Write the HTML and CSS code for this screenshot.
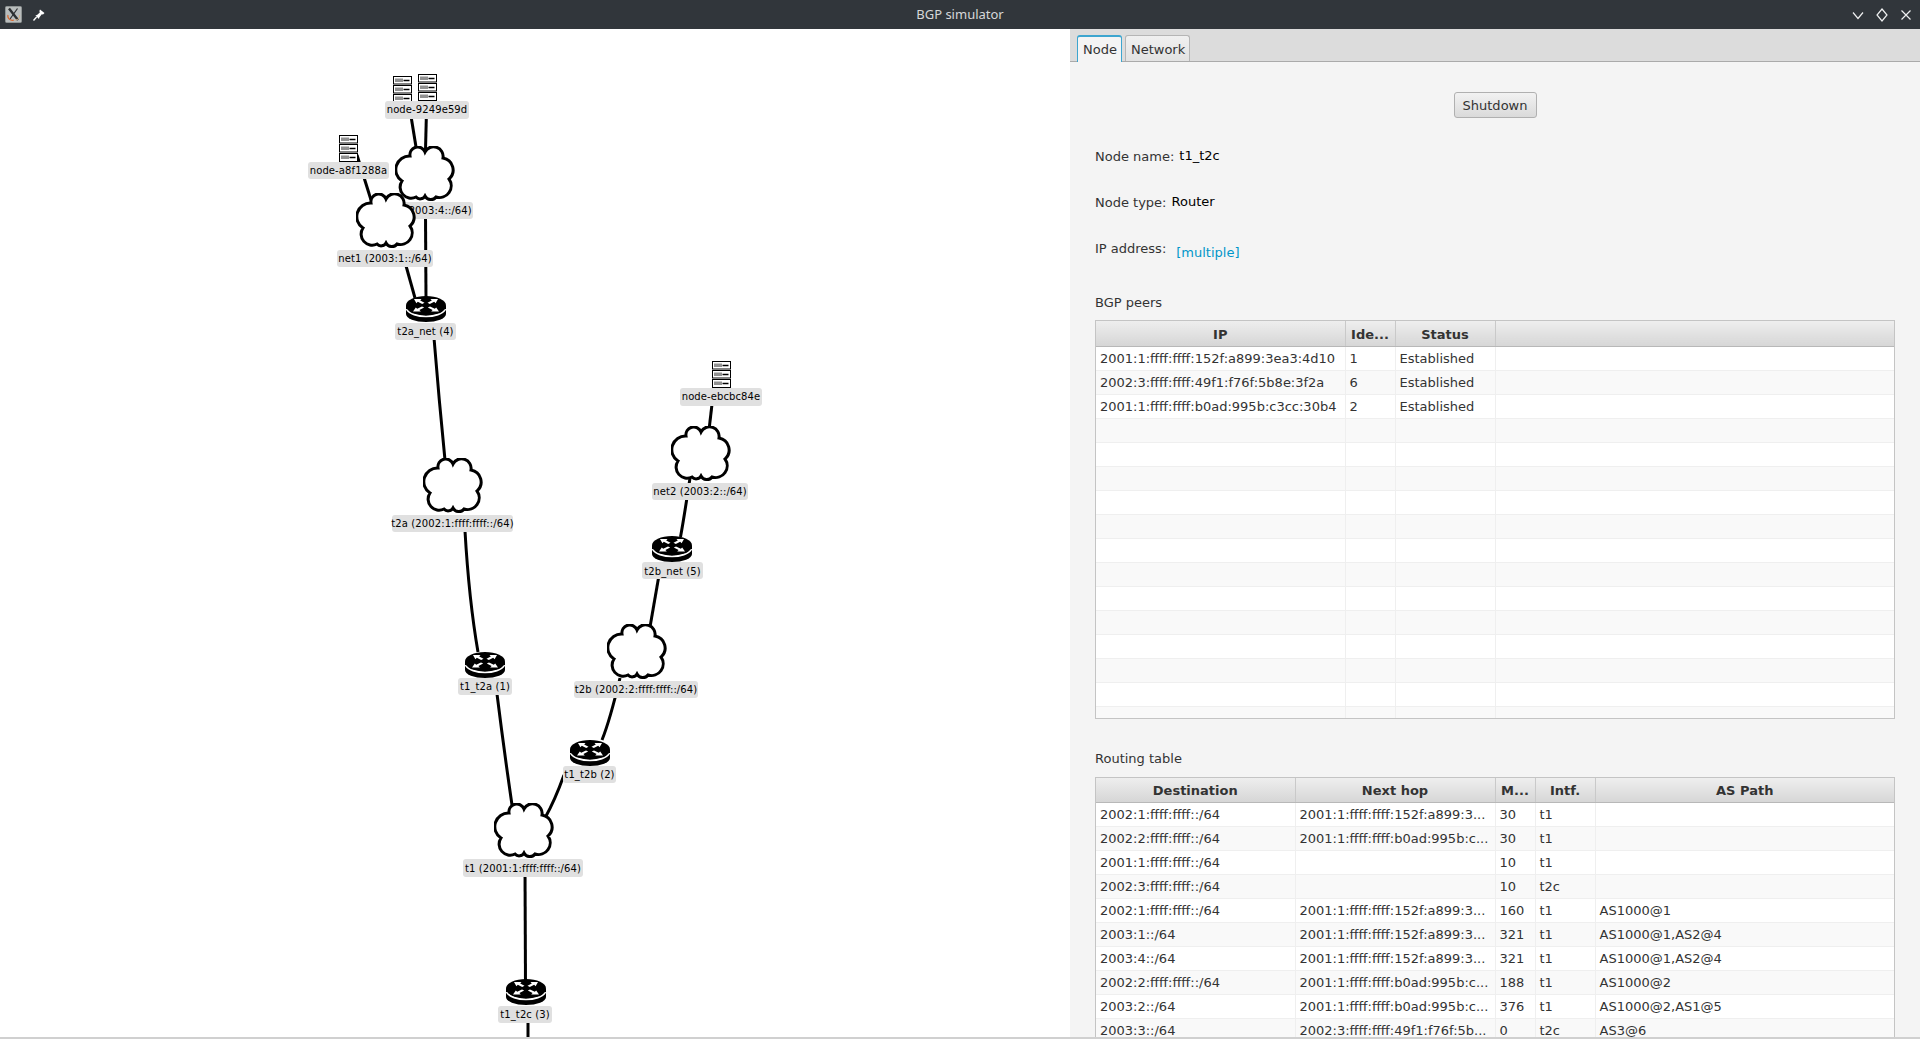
FILE: index.html
```html
<!DOCTYPE html>
<html lang="en">
<head>
    <meta charset="UTF-8">
    <title>BGP simulator</title>
    <link rel="stylesheet" href="styles.css">
</head>
<body>
    <!-- Barra de titulo -->
    <header class="titlebar">
        <div class="titlebar-left">
            <svg class="app-icon" width="17" height="17" viewBox="0 0 17 17">
                <rect x="0.5" y="0.5" width="16" height="16" rx="1" fill="#b9bdbd" stroke="#8f9494"/>
                <path d="M4 2.5 L13 14" stroke="#2c2f31" stroke-width="2.4" fill="none"/>
                <path d="M12.5 2.5 L5 13" stroke="#2c2f31" stroke-width="1.2" fill="none"/>
                <path d="M3 9 C2 13 6 15 9 14" stroke="#d9692e" stroke-width="1.2" fill="none"/>
                <path d="M10 14 C13 14 15 12 14.5 9" stroke="#d8b184" stroke-width="1" fill="none"/>
            </svg>
            <svg class="pin-icon" width="12" height="12" viewBox="0 0 12 12">
                <path d="M7 0.5 L11.5 4 L10 5.5 L8.8 5.2 L6.3 8.4 L6 10 L2.4 6.6 L4 6 L6.8 3.4 L6.4 2 Z" fill="#fff"/>
                <path d="M3.6 8 L0.5 11.5" stroke="#fff" stroke-width="1.3"/>
            </svg>
        </div>
        <div class="title">BGP simulator</div>
        <div class="window-btns">
            <svg width="12" height="12" viewBox="0 0 12 12"><path d="M1 3.5 L6 9.5 L11 3.5" class="win-stroke"/></svg>
            <svg width="12" height="14" viewBox="0 0 12 14"><path d="M6 1 L11 7 L6 13 L1 7 Z" class="win-stroke"/></svg>
            <svg width="12" height="12" viewBox="0 0 12 12"><path d="M1.5 1.5 L10.5 10.5 M10.5 1.5 L1.5 10.5" class="win-stroke"/></svg>
        </div>
    </header>

    <main class="main">
        <!-- Grafo de la red -->
        <section class="graph">
            <svg class="graph-svg" width="1070" height="1010" viewBox="0 29 1070 1010">
                <defs>
                    <symbol id="cloud" viewBox="0 0 60 57" width="60" height="57">
                        <path d="M15 10 A7.8 7.8 0 0 1 30 6 A9.6 9.6 0 0 1 48 12 A12.1 12.1 0 0 1 54 33 A11.7 11.7 0 0 1 41 51 A6.5 6.5 0 0 1 30 50 A5.5 5.5 0 0 1 21 51 A11 11 0 0 1 7 35 A13.6 13.6 0 0 1 15 10 Z" fill="#fff" stroke="#000" stroke-width="3"/>
                    </symbol>
                    <symbol id="router" viewBox="0 0 40 26" width="40" height="26">
                        <ellipse cx="20" cy="18" rx="20" ry="8" fill="#000"/>
                        <rect x="0" y="10" width="40" height="8" fill="#000"/>
                        <path d="M0.5 13 C3 18 12 20.5 20 20.5 C28 20.5 37 18 39.5 13" fill="none" stroke="#fff" stroke-width="1.6"/>
                        <ellipse cx="20" cy="9.5" rx="20" ry="9.5" fill="#000"/>
                        <path d="M8 3 L15.5 3 L14.2 4.5 L18.5 6.8 L16.2 8 L11.8 5.8 L10.4 7.2 Z" fill="#fff"/>
                        <path d="M32 3 L24.5 3 L25.8 4.5 L21.5 6.8 L23.8 8 L28.2 5.8 L29.6 7.2 Z" fill="#fff"/>
                        <path d="M7 15.5 L14.8 15.5 L13.4 14 L18.2 11.6 L16 10.4 L11.2 12.8 L9.8 11.4 Z" fill="#fff"/>
                        <path d="M33 15.5 L25.2 15.5 L26.6 14 L21.8 11.6 L24 10.4 L28.8 12.8 L30.2 11.4 Z" fill="#fff"/>
                    </symbol>
                    <symbol id="server" viewBox="0 0 19 27" width="19" height="27">
                        <g fill="#fff" stroke="#000">
                            <rect x="0.5" y="0.5" width="18" height="7.500"/>
                            <rect x="0.5" y="9.5" width="18" height="7.500"/>
                            <rect x="0.5" y="18.5" width="18" height="8"/>
                        </g>
                        <path d="M3 2.500 V6 M5 2.500 V6 M7 2.500 V6 M9 2.500 V6 M3 11.500 V15 M5 11.500 V15 M7 11.500 V15 M9 11.500 V15 M3 20.500 V24 M5 20.500 V24 M7 20.500 V24 M9 20.500 V24" stroke="#222" stroke-width="1"/>
                        <path d="M10.500 4.500 H16.500 M10.500 13.500 H16.500 M10.500 22.500 H16.500" stroke="#000" stroke-width="1.400"/>
                    </symbol>
                </defs>

                <!-- Enlaces -->
                <g class="links">
                    <path d="M410 110 L416.500 150"/>
                    <path d="M426.500 110 L425.500 150"/>
                    <path d="M357 155 L371 200"/>
                    <path d="M403 255 L415 298"/>
                    <path d="M425.500 215 L426 298"/>
                    <path d="M434 338 Q439 400 445 460"/>
                    <path d="M465 531 Q469 600 478 652"/>
                    <path d="M497 694 Q504 750 512 805"/>
                    <path d="M545 818 Q555 800 564 775"/>
                    <path d="M602 740 Q610 720 620 678"/>
                    <path d="M650 627 L658.500 578"/>
                    <path d="M680.500 537 Q684 518 690 478"/>
                    <path d="M712.500 400 L709 430"/>
                    <path d="M525 870 L525.500 985"/>
                    <path d="M528 1020 L528 1040"/>
                </g>

                <!-- Nodos -->
                <use href="#server" x="393" y="76"/>
                <use href="#server" x="418" y="74"/>
                <rect class="tag" x="385" y="101" width="84" height="18" rx="3"/>
                <text class="tag-text" x="427" y="113">node-9249e59d</text>

                <rect class="tag" x="377" y="202" width="96" height="17" rx="3"/>
                <text class="tag-text" x="425" y="214">net4 (2003:4::/64)</text>
                <use href="#cloud" x="395" y="146"/>

                <use href="#server" x="339" y="135"/>
                <rect class="tag" x="308" y="162" width="81" height="17" rx="3"/>
                <text class="tag-text" x="348.500" y="174">node-a8f1288a</text>

                <use href="#cloud" x="356" y="193"/>
                <rect class="tag" x="337" y="250" width="96" height="17" rx="3"/>
                <text class="tag-text" x="385" y="262">net1 (2003:1::/64)</text>

                <use href="#router" x="406" y="296"/>
                <rect class="tag" x="395" y="323" width="61" height="17" rx="3"/>
                <text class="tag-text" x="425.500" y="335">t2a_net (4)</text>

                <use href="#cloud" x="423" y="458"/>
                <rect class="tag" x="392" y="515" width="121" height="17" rx="3"/>
                <text class="tag-text" x="452.500" y="527">t2a (2002:1:ffff:ffff::/64)</text>

                <use href="#router" x="465" y="652"/>
                <rect class="tag" x="458" y="678" width="54" height="17" rx="3"/>
                <text class="tag-text" x="485" y="690">t1_t2a (1)</text>

                <use href="#server" x="712" y="361"/>
                <rect class="tag" x="680" y="388" width="82" height="18" rx="3"/>
                <text class="tag-text" x="721" y="400">node-ebcbc84e</text>

                <use href="#cloud" x="671" y="426"/>
                <rect class="tag" x="652" y="483" width="96" height="17" rx="3"/>
                <text class="tag-text" x="700" y="495">net2 (2003:2::/64)</text>

                <use href="#router" x="652" y="536"/>
                <rect class="tag" x="642" y="562" width="61" height="17" rx="3"/>
                <text class="tag-text" x="672.500" y="575">t2b_net (5)</text>

                <use href="#cloud" x="607" y="624"/>
                <rect class="tag" x="574" y="681" width="124" height="17" rx="3"/>
                <text class="tag-text" x="636" y="693">t2b (2002:2:ffff:ffff::/64)</text>

                <use href="#router" x="570" y="740"/>
                <rect class="tag" x="563" y="766" width="53" height="17" rx="3"/>
                <text class="tag-text" x="589.500" y="778">t1_t2b (2)</text>

                <use href="#cloud" x="494" y="803"/>
                <rect class="tag" x="463" y="859" width="120" height="18" rx="3"/>
                <text class="tag-text" x="523" y="872">t1 (2001:1:ffff:ffff::/64)</text>

                <use href="#router" x="506" y="979"/>
                <rect class="tag" x="498" y="1006" width="54" height="17" rx="3"/>
                <text class="tag-text" x="525" y="1018">t1_t2c (3)</text>
            </svg>
        </section>

        <!-- Panel derecho -->
        <section class="panel">
            <nav class="tabs">
                <div class="tab tab-active">Node</div>
                <div class="tab">Network</div>
            </nav>
            <div class="panel-body">
                <div class="center">
                    <button class="btn">Shutdown</button>
                </div>
                <div class="field">
                    <span class="field-label">Node name:</span>
                    <span class="field-value value-name">t1_t2c</span>
                </div>
                <div class="field">
                    <span class="field-label">Node type:</span>
                    <span class="field-value value-type">Router</span>
                </div>
                <div class="field">
                    <span class="field-label">IP address:</span>
                    <a class="field-link">[multiple]</a>
                </div>

                <div class="section-title first">BGP peers</div>
                <div class="table-wrap peers-wrap">
                    <table class="grid peers">
                        <colgroup>
                            <col class="c-ip"><col class="c-ide"><col class="c-status"><col>
                        </colgroup>
                        <thead>
                            <tr><th>IP</th><th>Ide...</th><th>Status</th><th></th></tr>
                        </thead>
                        <tbody>
                            <tr><td>2001:1:ffff:ffff:152f:a899:3ea3:4d10</td><td>1</td><td>Established</td><td></td></tr>
                            <tr><td>2002:3:ffff:ffff:49f1:f76f:5b8e:3f2a</td><td>6</td><td>Established</td><td></td></tr>
                            <tr><td>2001:1:ffff:ffff:b0ad:995b:c3cc:30b4</td><td>2</td><td>Established</td><td></td></tr>
                            <tr><td></td><td></td><td></td><td></td></tr>
                            <tr><td></td><td></td><td></td><td></td></tr>
                            <tr><td></td><td></td><td></td><td></td></tr>
                            <tr><td></td><td></td><td></td><td></td></tr>
                            <tr><td></td><td></td><td></td><td></td></tr>
                            <tr><td></td><td></td><td></td><td></td></tr>
                            <tr><td></td><td></td><td></td><td></td></tr>
                            <tr><td></td><td></td><td></td><td></td></tr>
                            <tr><td></td><td></td><td></td><td></td></tr>
                            <tr><td></td><td></td><td></td><td></td></tr>
                            <tr><td></td><td></td><td></td><td></td></tr>
                            <tr><td></td><td></td><td></td><td></td></tr>
                            <tr><td></td><td></td><td></td><td></td></tr>
                        </tbody>
                    </table>
                </div>

                <div class="section-title second">Routing table</div>
                <div class="table-wrap">
                    <table class="grid routes">
                        <colgroup>
                            <col class="c-dest"><col class="c-hop"><col class="c-m"><col class="c-intf"><col>
                        </colgroup>
                        <thead>
                            <tr><th>Destination</th><th>Next hop</th><th>M...</th><th>Intf.</th><th>AS Path</th></tr>
                        </thead>
                        <tbody>
                            <tr><td>2002:1:ffff:ffff::/64</td><td>2001:1:ffff:ffff:152f:a899:3...</td><td>30</td><td>t1</td><td></td></tr>
                            <tr><td>2002:2:ffff:ffff::/64</td><td>2001:1:ffff:ffff:b0ad:995b:c...</td><td>30</td><td>t1</td><td></td></tr>
                            <tr><td>2001:1:ffff:ffff::/64</td><td></td><td>10</td><td>t1</td><td></td></tr>
                            <tr><td>2002:3:ffff:ffff::/64</td><td></td><td>10</td><td>t2c</td><td></td></tr>
                            <tr><td>2002:1:ffff:ffff::/64</td><td>2001:1:ffff:ffff:152f:a899:3...</td><td>160</td><td>t1</td><td>AS1000@1</td></tr>
                            <tr><td>2003:1::/64</td><td>2001:1:ffff:ffff:152f:a899:3...</td><td>321</td><td>t1</td><td>AS1000@1,AS2@4</td></tr>
                            <tr><td>2003:4::/64</td><td>2001:1:ffff:ffff:152f:a899:3...</td><td>321</td><td>t1</td><td>AS1000@1,AS2@4</td></tr>
                            <tr><td>2002:2:ffff:ffff::/64</td><td>2001:1:ffff:ffff:b0ad:995b:c...</td><td>188</td><td>t1</td><td>AS1000@2</td></tr>
                            <tr><td>2003:2::/64</td><td>2001:1:ffff:ffff:b0ad:995b:c...</td><td>376</td><td>t1</td><td>AS1000@2,AS1@5</td></tr>
                            <tr><td>2003:3::/64</td><td>2002:3:ffff:ffff:49f1:f76f:5b...</td><td>0</td><td>t2c</td><td>AS3@6</td></tr>
                        </tbody>
                    </table>
                </div>
            </div>
        </section>
    </main>
    <div class="bottom-edge"></div>
</body>
</html>
```

FILE: styles.css
```css
html, body {
    margin: 0;
    height: 100%;
    overflow: hidden;
}
body {
    display: flex;
    flex-direction: column;
    font-family: "DejaVu Sans", sans-serif;
    font-size: 13px;
    color: #333;
    background-color: #fff;
}

/* titlebar */
.titlebar {
    height: 29px;
    flex: none;
    display: flex;
    align-items: center;
    justify-content: space-between;
    position: relative;
    background-color: #31363b;
    color: #d6d8d9;
}
.titlebar-left {
    display: flex;
    align-items: center;
    gap: 11px;
    padding-left: 5px;
}
.title {
    position: absolute;
    left: 0;
    right: 0;
    top: 4px;
    text-align: center;
    font-family: "Noto Sans", sans-serif;
    font-size: 13px;
    line-height: 20px;
}
.window-btns {
    display: flex;
    align-items: center;
    gap: 12px;
    padding-right: 8px;
}
.win-stroke {
    fill: none;
    stroke: #eff0f1;
    stroke-width: 1.2;
}

.main {
    flex: 1;
    min-height: 0;
    display: flex;
}
.bottom-edge {
    height: 2px;
    flex: none;
    background-color: #d0d0d0;
}

/* graph */
.graph {
    width: 1070px;
    flex: none;
    overflow: hidden;
    background-color: #fff;
}
.graph-svg {
    display: block;
}
.links path {
    fill: none;
    stroke: #000;
    stroke-width: 3;
}
.tag {
    fill: #e0e0e0;
}
.tag-text {
    font-family: "DejaVu Sans", sans-serif;
    font-size: 10px;
    letter-spacing: 0.1px;
    fill: #000;
    text-anchor: middle;
}

/* right panel */
.panel {
    flex: 1;
    min-width: 0;
    overflow: hidden;
    background-color: #f4f4f4;
}
.tabs {
    height: 33px;
    box-sizing: border-box;
    display: flex;
    align-items: flex-end;
    gap: 3px;
    padding-left: 7px;
    background-color: #dcdcdc;
    border-bottom: 1px solid #aaa;
}
.tab {
    height: 26px;
    box-sizing: border-box;
    padding: 6px 4px 0 5px;
    background: linear-gradient(#f0f0f0, #e2e2e2);
    border: 1px solid #b5b5b5;
    border-bottom: none;
    border-radius: 3px 3px 0 0;
}
.tab-active {
    background: #f4f4f4;
    border-color: #3da5cf;
    border-top-width: 2px;
    padding-top: 5px;
    margin-bottom: -1px;
    height: 27px;
}
.panel-body {
    padding: 30px 25px 0;
}
.center {
    text-align: center;
}
.btn {
    height: 26px;
    width: 83px;
    padding: 0;
    font-family: inherit;
    font-size: 13px;
    color: #333;
    background: linear-gradient(#f2f2f2, #dadada);
    border: 1px solid #b0b0b0;
    border-radius: 3px;
}
.field {
    height: 18px;
    margin-top: 28px;
    line-height: 20px;
    display: flex;
}
.center + .field {
    margin-top: 29px;
}
.field-value {
    color: #000;
    margin-top: -1px;
}
.value-name {
    margin-left: 5px;
}
.value-type {
    margin-left: 5px;
}
.field-link {
    margin-left: 10px;
    margin-top: 4px;
    color: #0096c9;
}
.section-title {
    height: 18px;
    line-height: 18px;
    margin-bottom: 9px;
}
.section-title.first {
    margin-top: 36px;
    line-height: 20px;
}
.section-title.second {
    margin-top: 31px;
}
.table-wrap {
    overflow: hidden;
    border: 1px solid #c4c4c4;
    background-color: #fff;
}
.peers-wrap {
    height: 397px;
}
.grid {
    width: 100%;
    border-collapse: collapse;
    table-layout: fixed;
}
.grid th {
    height: 25px;
    box-sizing: border-box;
    padding: 2px 0 0;
    font-weight: bold;
    text-align: center;
    background: linear-gradient(#eeeeee, #d6d6d6);
    border-right: 1px solid #c9c9c9;
    border-bottom: 1px solid #b8b8b8;
}
.routes th {
    height: 24px;
    padding-top: 1px;
}
.grid td {
    height: 24px;
    box-sizing: border-box;
    padding: 0 4px;
    white-space: nowrap;
    overflow: hidden;
    border-right: 1px solid #efefef;
    border-bottom: 1px solid #efefef;
}
.grid th:last-child, .grid td:last-child {
    border-right: none;
}
.grid tbody tr:nth-child(even) {
    background-color: #f9f9f9;
}
.c-ip { width: 249px; }
.c-ide { width: 50px; }
.c-status { width: 100px; }
.c-dest { width: 199px; }
.c-hop { width: 200px; }
.c-m { width: 40px; }
.c-intf { width: 60px; }
```
